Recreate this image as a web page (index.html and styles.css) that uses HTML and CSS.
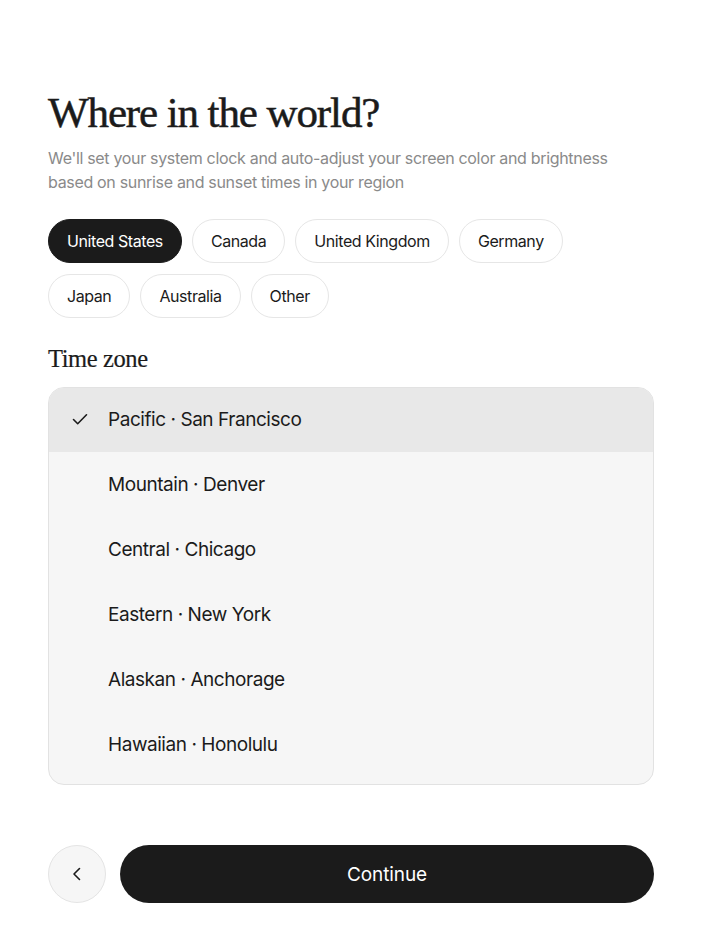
FILE: index.html
```html
<!DOCTYPE html>
<html lang="en">
<head>
    <meta charset="UTF-8">
    <meta name="viewport" content="width=device-width, initial-scale=1.0">
    <title>Where in the world?</title>
    <link rel="stylesheet" href="styles.css">
</head>
<body>

<div class="container">
    <h1>Where in the world?</h1>
    <p class="intro">We'll set your system clock and auto-adjust your screen color and brightness based on sunrise and sunset times in your region</p>

    <div class="chips">
        <button class="chip active">United States</button>
        <button class="chip">Canada</button>
        <button class="chip">United Kingdom</button>
        <button class="chip">Germany</button>
        <button class="chip">Japan</button>
        <button class="chip">Australia</button>
        <button class="chip">Other</button>
    </div>

    <h2>Time zone</h2>

    <ul class="zones">
        <li class="zone selected">
            <svg class="check" width="20" height="20" viewBox="0 0 20 20" fill="none" stroke="#1b1b1b" stroke-width="1.6" stroke-linecap="round" stroke-linejoin="round"><path d="M3.5 10.5l4.2 4.2L16.5 5.8"/></svg>
            Pacific · San Francisco
        </li>
        <li class="zone">Mountain · Denver</li>
        <li class="zone">Central · Chicago</li>
        <li class="zone">Eastern · New York</li>
        <li class="zone">Alaskan · Anchorage</li>
        <li class="zone">Hawaiian · Honolulu</li>
    </ul>

    <div class="actions">
        <button class="back-button" aria-label="Back">
            <svg width="20" height="20" viewBox="0 0 20 20" fill="none" stroke="#1b1b1b" stroke-width="1.6" stroke-linecap="round" stroke-linejoin="round"><path d="M12.5 4.5L7 10l5.5 5.5"/></svg>
        </button>
        <button class="continue-button">Continue</button>
    </div>
</div>

</body>
</html>
```

FILE: styles.css
```css
body {
    font-family: Inter, "Noto Sans", sans-serif;
    background-color: #fff;
    color: #1b1b1b;
    margin: 0;
    padding: 0;
}

.container {
    width: 606px;
    margin: 0 auto;
    padding-top: 89px;
}

h1 {
    font-family: "Liberation Serif", "DejaVu Serif", serif;
    font-size: 43px;
    font-weight: normal;
    letter-spacing: -1.1px;
    line-height: 48px;
    margin: 0;
    color: #1b1b1b;
    -webkit-text-stroke: 0.5px #1b1b1b;
}

.intro {
    font-size: 16px;
    line-height: 24px;
    letter-spacing: -0.32px;
    color: #8a8a8a;
    margin: 9px 0 0;
}

.chips {
    display: flex;
    flex-wrap: wrap;
    gap: 11px 10px;
    margin-top: 25px;
}

.chip {
    height: 44px;
    padding: 0 18px;
    font-family: inherit;
    font-size: 16px;
    letter-spacing: -0.42px;
    color: #1b1b1b;
    background-color: #fff;
    border: 1px solid #e6e6e6;
    border-radius: 22px;
    cursor: pointer;
}

.chip.active {
    background-color: #1b1b1b;
    border-color: #1b1b1b;
    color: #fff;
}

h2 {
    font-family: "Liberation Serif", "DejaVu Serif", serif;
    font-size: 24.5px;
    font-weight: normal;
    letter-spacing: -0.4px;
    margin: 27px 0 0;
    line-height: 28px;
    -webkit-text-stroke: 0.2px #1b1b1b;
}

.zones {
    list-style: none;
    margin: 14px 0 0;
    padding: 0 0 6px;
    background-color: #f6f6f6;
    border: 1px solid #e2e2e2;
    border-radius: 16px;
    overflow: hidden;
}

.zone {
    display: flex;
    align-items: center;
    box-sizing: border-box;
    height: 65px;
    padding-left: 59px;
    padding-bottom: 2px;
    font-size: 19px;
    letter-spacing: -0.45px;
    color: #1b1b1b;
}

.zone.selected {
    height: 64px;
    background-color: #e8e8e8;
    padding-left: 21px;
}

.zone.selected + .zone {
    height: 66px;
    padding-top: 1px;
}

.check {
    margin-right: 18px;
}

.actions {
    display: flex;
    gap: 14px;
    margin-top: 60px;
}

.back-button {
    width: 58px;
    height: 58px;
    flex-shrink: 0;
    display: flex;
    align-items: center;
    justify-content: center;
    background-color: #f6f6f6;
    border: 1px solid #e4e4e4;
    border-radius: 50%;
    padding: 0;
    cursor: pointer;
}

.continue-button {
    flex: 1;
    height: 58px;
    background-color: #1b1b1b;
    color: #fff;
    border: none;
    border-radius: 29px;
    font-family: inherit;
    font-size: 19px;
    letter-spacing: -0.1px;
    cursor: pointer;
}
```
